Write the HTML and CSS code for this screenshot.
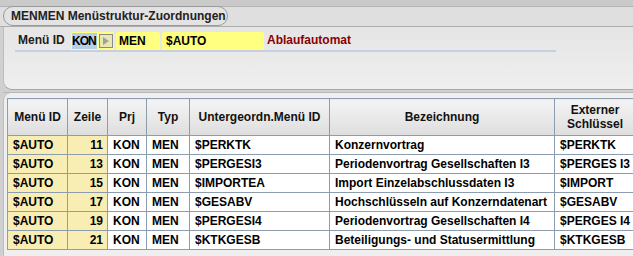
FILE: index.html
```html
<!DOCTYPE html>
<html>
<head>
<meta charset="utf-8">
<link rel="stylesheet" href="styles.css">
</head>
<body>
<div class="top"></div>
<div class="titlebar">
  <div class="pill">MENMEN Menüstruktur-Zuordnungen</div>
</div>
<div class="panel">
  <div class="formrow">
    <span class="label">Menü ID</span>
    <span class="field f-kon"><span class="sel">KON</span><span class="btn"><svg width="8" height="8" viewBox="0 0 8 8"><polygon points="1,0 7,4 1,8" fill="#a0a0a0"/></svg></span></span>
    <span class="field f-men">MEN</span>
    <span class="field f-auto">$AUTO</span>
    <span class="desc">Ablaufautomat</span>
  </div>
</div>
<div class="gap"></div>
<div class="tablewrap">
  <table class="grid">
    <colgroup>
      <col class="c1"><col class="c2"><col class="c3"><col class="c4"><col class="c5"><col class="c6"><col class="c7">
    </colgroup>
    <thead>
      <tr>
        <th>Menü ID</th><th>Zeile</th><th>Prj</th><th>Typ</th><th>Untergeordn.Menü ID</th><th>Bezeichnung</th><th>Externer<br>Schlüssel</th>
      </tr>
    </thead>
    <tbody>
      <tr><td class="y">$AUTO</td><td class="y num">11</td><td>KON</td><td>MEN</td><td>$PERKTK</td><td>Konzernvortrag</td><td>$PERKTK</td></tr>
      <tr><td class="y">$AUTO</td><td class="y num">13</td><td>KON</td><td>MEN</td><td>$PERGESI3</td><td>Periodenvortrag Gesellschaften I3</td><td>$PERGES I3</td></tr>
      <tr><td class="y">$AUTO</td><td class="y num">15</td><td>KON</td><td>MEN</td><td>$IMPORTEA</td><td>Import Einzelabschlussdaten I3</td><td>$IMPORT</td></tr>
      <tr><td class="y">$AUTO</td><td class="y num">17</td><td>KON</td><td>MEN</td><td>$GESABV</td><td>Hochschlüsseln auf Konzerndatenart</td><td>$GESABV</td></tr>
      <tr><td class="y">$AUTO</td><td class="y num">19</td><td>KON</td><td>MEN</td><td>$PERGESI4</td><td>Periodenvortrag Gesellschaften I4</td><td>$PERGES I4</td></tr>
      <tr><td class="y">$AUTO</td><td class="y num">21</td><td>KON</td><td>MEN</td><td>$KTKGESB</td><td>Beteiligungs- und Statusermittlung</td><td>$KTKGESB</td></tr>
    </tbody>
  </table>
</div>
</body>
</html>
```

FILE: styles.css
```css
html, body {
  margin: 0;
  padding: 0;
}
body {
  width: 633px;
  height: 256px;
  overflow: hidden;
  background: #d0d0d0;
  font-family: "Liberation Sans", Arial, sans-serif;
  font-size: 12px;
  font-weight: bold;
  color: #000;
}
.top {
  height: 6px;
  background: #cacaca;
  border-bottom: 1px solid #b4b4b4;
}
.titlebar {
  position: relative;
  height: 19px;
  background: #dfdfdf;
  border-bottom: 1px solid #adadad;
}
.pill {
  position: absolute;
  left: 3px;
  top: -1px;
  height: 20px;
  width: 225px;
  box-sizing: border-box;
  border: 1px solid #9a9a9a;
  border-radius: 10px;
  background: #e3e3e3;
  padding-left: 7px;
  line-height: 18px;
  font-size: 12px;
  color: #222;
}
.panel {
  margin-left: 3px;
  height: 62px;
  background: linear-gradient(#e5e5e5, #efefef);
  border-left: 1px solid #bdbdbd;
  border-bottom: 1px solid #a6a6a6;
  border-bottom-left-radius: 9px;
}
.formrow {
  display: flex;
  align-items: stretch;
  height: 19px;
  padding-top: 4px;
  margin-left: 11px;
  width: 541px;
  border-bottom: 2px solid #c6d0e2;
}
.label {
  width: 53px;
  padding-left: 3px;
  line-height: 19px;
  color: #202020;
}
.field {
  display: flex;
  align-items: center;
  box-sizing: border-box;
  background: #ffff80;
  border-top: 1px solid #f0f090;
  border-radius: 3px 3px 0 0;
  margin-right: 2px;
  line-height: 18px;
}
.f-kon {
  width: 43px;
  padding-left: 1px;
}
.sel {
  background: #b9cfe6;
  line-height: 16px;
  letter-spacing: -1px;
  padding-right: 1px;
}
.btn {
  display: flex;
  align-items: center;
  justify-content: center;
  box-sizing: border-box;
  width: 14px;
  height: 14px;
  margin-left: auto;
  margin-right: 1px;
  border: 1px solid #8a8a8a;
  background: #e8e8b0;
}
.f-men {
  width: 44px;
  padding-left: 3px;
}
.f-auto {
  width: 102px;
  padding-left: 4px;
}
.desc {
  color: #8b0000;
  line-height: 18px;
  padding-left: 1px;
}
.gap {
  height: 2px;
  background: #d0d0d0;
  border-bottom: 1px solid #b8b8b8;
  margin-left: 3px;
}
.tablewrap {
  margin-left: 3px;
  height: 158px;
  overflow: hidden;
  background: #efefef;
  border-left: 1px solid #bdbdbd;
  border-top-left-radius: 8px;
  padding: 5px 0 0 3px;
}
.grid {
  border-collapse: collapse;
  table-layout: fixed;
  width: 628px;
  background: #fff;
}
.c1 { width: 60px; }
.c2 { width: 40px; }
.c3 { width: 39px; }
.c4 { width: 43px; }
.c5 { width: 140px; }
.c6 { width: 225px; }
.c7 { width: 81px; }
.grid th {
  height: 36px;
  padding: 0;
  border: 1px solid #8d9db0;
  background: linear-gradient(#f4f4f4, #dedede);
  text-align: center;
  font-weight: bold;
  line-height: 14px;
  color: #111;
}
.grid td {
  height: 18px;
  padding: 0 0 0 5px;
  border: 1px solid #8d9db0;
  white-space: nowrap;
  overflow: hidden;
  line-height: 18px;
}
.grid td.y {
  background: #f8edb2;
}
.grid td.num {
  text-align: right;
  padding: 0 4px 0 0;
}
```
